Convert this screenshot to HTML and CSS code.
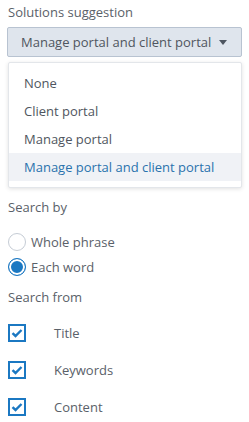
FILE: index.html
```html
<!DOCTYPE html>
<html>
<head>
<meta charset="utf-8">
<link rel="stylesheet" href="styles.css">
</head>
<body>
<div class="panel">
  <div class="field select-field">
    <div class="label">Solutions suggestion</div>
    <div class="select">
      <span class="select-value">Manage portal and client portal</span>
      <svg class="caret" width="8" height="5" viewBox="0 0 8 5"><path d="M0 0h8L4 5z" fill="#4d5560"/></svg>
    </div>
    <ul class="menu">
      <li class="option">None</li>
      <li class="option">Client portal</li>
      <li class="option">Manage portal</li>
      <li class="option active">Manage portal and client portal</li>
    </ul>
  </div>

  <div class="field search-by">
    <div class="label">Search by</div>
    <div class="radios">
      <label class="radio"><span class="dot"></span>Whole phrase</label>
      <label class="radio checked"><span class="dot"></span>Each word</label>
    </div>
  </div>

  <div class="field search-from">
    <div class="label">Search from</div>
    <div class="checks">
      <label class="check"><span class="box"><svg width="12" height="10" viewBox="0 0 12 10"><path d="M1.5 5.2l3 2.8 6-6" fill="none" stroke="#1b78c2" stroke-width="2.4"/></svg></span>Title</label>
      <label class="check"><span class="box"><svg width="12" height="10" viewBox="0 0 12 10"><path d="M1.5 5.2l3 2.8 6-6" fill="none" stroke="#1b78c2" stroke-width="2.4"/></svg></span>Keywords</label>
      <label class="check"><span class="box"><svg width="12" height="10" viewBox="0 0 12 10"><path d="M1.5 5.2l3 2.8 6-6" fill="none" stroke="#1b78c2" stroke-width="2.4"/></svg></span>Content</label>
    </div>
  </div>
</div>
</body>
</html>
```

FILE: styles.css
```css
* { box-sizing: border-box; }
html, body { margin: 0; padding: 0; background: #fff; }
body {
  font-family: "Open Sans", "Noto Sans", sans-serif;
  font-size: 13px;
  color: #5a6169;
}
.panel {
  padding: 3px 7px 0 8px;
}
.label {
  line-height: 18px;
  color: #5a6169;
}
.select-field {
  position: relative;
}
.select {
  margin-top: 6px;
  margin-left: -1px;
  height: 30px;
  display: flex;
  align-items: center;
  justify-content: space-between;
  padding: 0 14px 0 13px;
  background: #dfe5ed;
  border: 1px solid #b8c3d1;
  border-radius: 2px;
  color: #4f5660;
}
.caret { display: block; }
.menu {
  position: absolute;
  left: 0;
  right: 0;
  top: 59px;
  margin: 0;
  padding: 6px 0;
  list-style: none;
  background: #fff;
  border: 1px solid #e3e6ea;
  border-radius: 2px;
  box-shadow: 0 1px 4px rgba(0,0,0,0.12);
  z-index: 5;
}
.option {
  height: 28px;
  line-height: 28px;
  padding-left: 15px;
  color: #4f5660;
}
.option.active {
  background: #f0f2f6;
  color: #2a72ad;
}
.search-by {
  margin-top: 141px;
}
.radios {
  margin-top: 17px;
  display: flex;
  flex-direction: column;
  gap: 7px;
}
.radio {
  display: flex;
  align-items: center;
  gap: 5px;
  line-height: 18px;
}
.dot {
  width: 18px;
  height: 18px;
  border-radius: 50%;
  border: 1px solid #c5ccd5;
  background: #fff;
  flex: none;
}
.radio.checked .dot {
  border: 1px solid #1b78c2;
  box-shadow: inset 0 0 0 2px #fff;
  background: #1b78c2;
}
.search-from {
  margin-top: 12px;
}
.checks {
  margin-top: 18px;
  display: flex;
  flex-direction: column;
  gap: 19px;
}
.check {
  display: flex;
  align-items: center;
  gap: 28px;
  line-height: 18px;
}
.box {
  width: 18px;
  height: 18px;
  border: 2px solid #1b78c2;
  display: flex;
  align-items: center;
  justify-content: center;
  flex: none;
  background: #fff;
}
.box svg { display: block; }
```
